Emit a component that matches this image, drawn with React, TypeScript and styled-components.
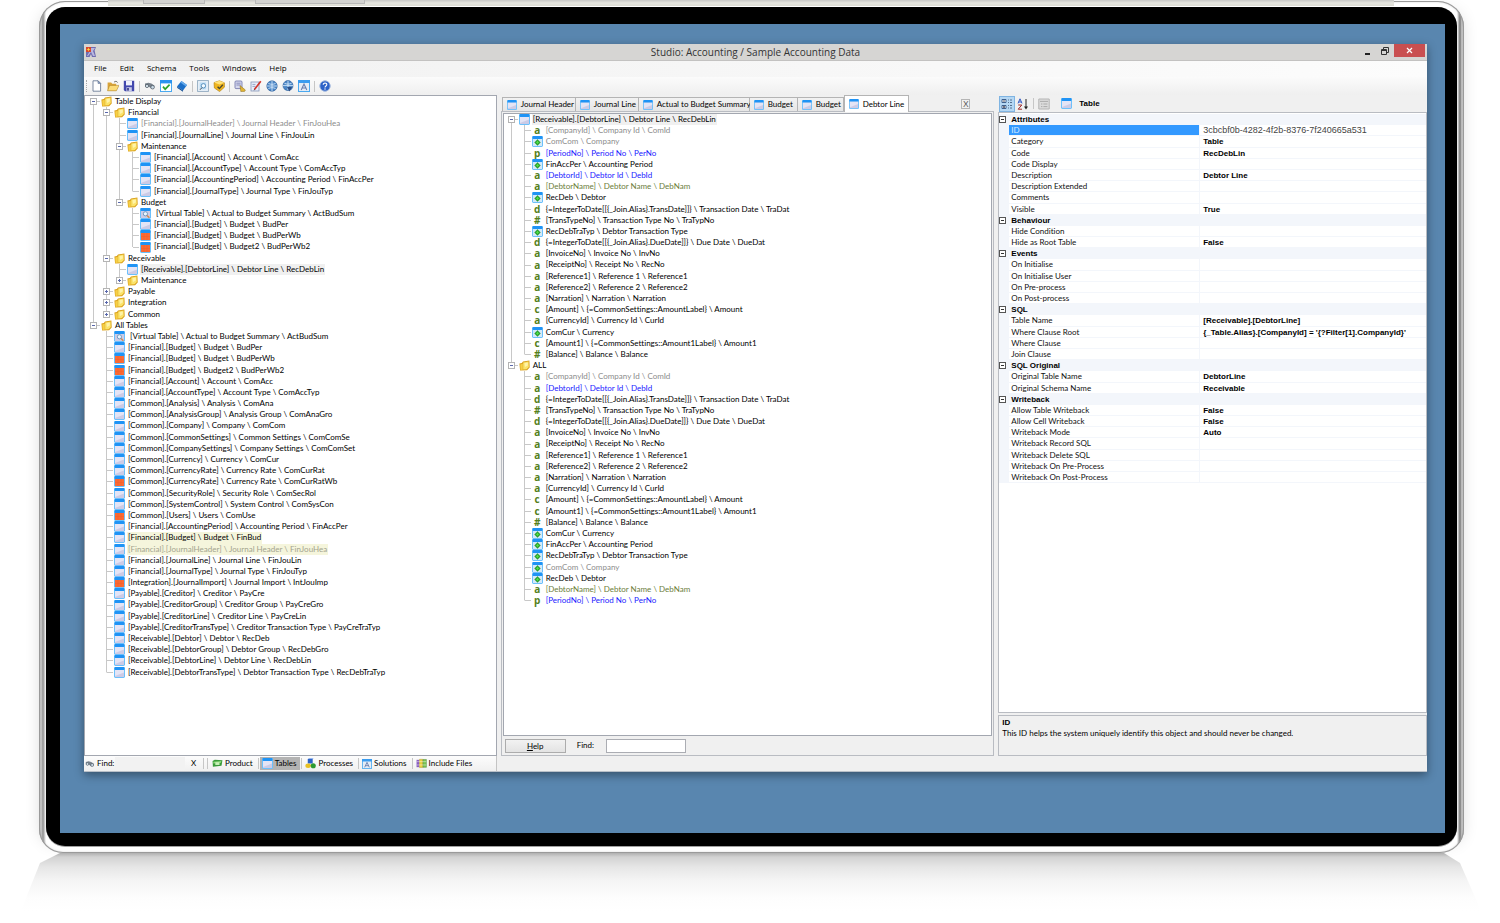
import React from "react";
import styled, { createGlobalStyle, css } from "styled-components";

const GlobalStyle = createGlobalStyle`
  * { box-sizing: border-box; }
  body { margin: 0; background: #fff; font: 8px/11px Lato, "Liberation Sans", sans-serif; font-variant-ligatures: none; color: #000; }
  button, input { font: inherit; color: inherit; margin: 0; padding: 0; border: 0; border-radius: 0; background: none; }
  svg { display: block; flex: none; }
`;

/* ---------- Monitor ---------- */
const Stage = styled.div`
  display: flex; flex-direction: column; min-height: 100vh; overflow: hidden;
`;
const TopEdge = styled.div`
  position: absolute; top: 0; left: 108px; right: 106px; height: 6px;
  background: linear-gradient(#c8c8c6, #e6e6e0 50%, #dcdcd4); z-index: 1;
  display: flex; padding-left: 35px; gap: 50px;
`;
const EdgeKey = styled.i<{ $w: number }>`
  width: ${(p) => p.$w}px; height: 4px; background: #d2d2d0; border: 1px solid #b8b8b8; border-top: 0;
`;
const Monitor = styled.div`
  flex: 1; display: flex; margin: 1px 36px 0 39px; padding: 6px 7px 7px; border-radius: 26px 26px 24px 24px;
  background: linear-gradient(90deg, #9a9a9a 0, #d0d0d0 2px, #8f8f8f 4px, #fff 7px, #fff calc(100% - 7px), #777 calc(100% - 4px), #d0d0d0 calc(100% - 2px), #9a9a9a 100%);
  box-shadow: inset 0 0 0 1px #9a9a9a, inset 0 0 3px #a8a8a8, -8px 0 18px -12px rgba(0, 0, 0, .2), 8px 0 18px -12px rgba(0, 0, 0, .2);
`;
const Bezel = styled.div`
  flex: 1; display: flex; min-width: 0; background: #000; border-radius: 19px; padding: 17px 12px 13px 14px;
  box-shadow: 0 1px #a0a0a0;
`;
const Desktop = styled.div`
  flex: 1; display: flex; min-width: 0; background: #5986af; padding: 20px 18px 61px 24px;
`;
const Reflection = styled.div`
  height: 70px; margin: 0 18px 0 20px; flex: none;
  background: linear-gradient(#b0b0b0 0, #d2d2d2 4px, #e6e6e6 14px, #f5f5f5 28px, #fdfdfd 44px, #fff 58px);
  clip-path: polygon(40px 0, calc(100% - 38px) 0, calc(100% - 22px) 10px, 100% 60px, 0 60px, 20px 10px);
`;

/* ---------- Window ---------- */
const Window = styled.div`
  flex: 1; min-width: 0; display: flex; flex-direction: column; background: #f0f0f0;
  box-shadow: 0 3px 9px rgba(0, 0, 0, .4); border-bottom: 1px solid #b9c0c8;
`;
const TitleBar = styled.header`
  display: grid; grid-template-columns: 72px 1fr 72px; height: 17px; background: #d6d5d3; border-bottom: 1px solid #c3c2c1; align-items: start;
`;
const AppIcon = styled.div`padding: 3px 2px;`;
const Title = styled.h1`
  margin: 0; font: 400 10px/16px "Open Sans", sans-serif; text-align: center; color: #333;
`;
const WinButtons = styled.div`display: flex; justify-content: flex-end; padding-right: 2px;`;
const WinButton = styled.button<{ $close?: boolean }>`
  width: ${(p) => (p.$close ? 31 : 18)}px; height: 13px; display: flex; align-items: center; justify-content: center;
  ${(p) => p.$close && css`background: #c94f50; color: #fff;`}
`;
const MenuBar = styled.nav`
  display: flex; align-items: flex-start; gap: 13px; padding-left: 10px; height: 16px; background: linear-gradient(90deg, #f1f1f1, #fcfcfc);
  font: 8px/14px "Open Sans", sans-serif;
`;
const MenuItem = styled.button``;
const ToolBar = styled.div`
  display: flex; align-items: center; height: 18px; padding-left: 2px; background: linear-gradient(#fbfbfb, #efefef);
`;
const Grip = styled.i`width: 1px; height: 12px; margin-right: 2px; border-left: 1px dotted #aaa;`;
const ToolButton = styled.button`width: 16px; height: 16px; display: flex; align-items: center; justify-content: center;`;
const Sep = styled.i<{ $m?: number }>`width: 1px; height: 11px; flex: none; background: #c6c6c6; margin: 0 ${(p) => p.$m ?? 2}px;`;

const Main = styled.main`
  flex: 1; display: grid; grid-template-columns: 413fr 494fr 429fr; column-gap: 4px; min-height: 0;
`;
const Column = styled.section`display: flex; flex-direction: column; min-width: 0;`;

/* ---------- Tree ---------- */
const TreeBox = styled.div<{ $pad?: string }>`
  flex: 1; background: #fff; border: 1px solid #a3a7b0; padding: ${(p) => p.$pad ?? "0 2px"};
`;
const List = styled.ul`list-style: none; margin: 0; padding: 0;`;
const Row = styled.li`display: flex; align-items: stretch; min-height: 1.4em; white-space: nowrap;`;
const Cell = styled.span<{ $line: "none" | "full" | "top" | "bottom" }>`
  width: 13px; flex: none; display: flex; align-items: center; padding-left: 3px;
  background-repeat: no-repeat;
  background-image: ${(p) => (p.$line === "none" ? "none" : "linear-gradient(#c8c8c8, #c8c8c8)")};
  background-size: 1px ${(p) => (p.$line === "full" ? "100%" : "50%")};
  background-position: 6px ${(p) => (p.$line === "bottom" ? "100%" : "0")};
`;
const Stub = styled.i<{ $box?: boolean }>`
  height: 1px; width: ${(p) => (p.$box ? 3 : 7)}px; margin-left: ${(p) => (p.$box ? 0 : 4)}px; background: #c8c8c8;
`;
const IconSlot = styled.span`width: 11px; margin: 0 2px 0 1px; flex: none; display: flex; align-items: center; justify-content: center;`;
const Label = styled.span<{ $color?: string; $bg?: string; $indent?: boolean }>`
  padding: 0 1px; padding-left: ${(p) => (p.$indent ? 3 : 1)}px; color: ${(p) => p.$color ?? "#000"}; background: ${(p) => p.$bg ?? "transparent"};
`;
const Glyph = styled.b`font: 700 10px/11px "Open Sans", sans-serif; color: #55801c;`;

/* ---------- Tabs ---------- */
const TabRow = styled.div`display: flex; align-items: flex-end; height: 16px; padding-left: 1px;`;
const Tab = styled.button<{ $w: number; $on?: boolean }>`
  display: flex; align-items: center; gap: 4px; width: ${(p) => p.$w}px; padding-left: 4px; white-space: nowrap;
  height: ${(p) => (p.$on ? 17 : 14)}px; margin-bottom: ${(p) => (p.$on ? -1 : 0)}px; position: relative;
  border: 1px solid #b4b4b4; border-left-width: ${(p) => (p.$on ? 1 : 0)}px; border-bottom: 0;
  background: ${(p) => (p.$on ? "#fff" : "linear-gradient(#f2f2f2, #e6e6e6)")};
  &:first-child { border-left-width: 1px; }
`;
const CloseTab = styled.button`
  margin: 0 24px 2px auto; width: 9px; height: 10px; border: 1px solid #b5b5b5; color: #555; line-height: 8px;
`;
const EditorBox = styled.div`
  flex: 1; display: flex; flex-direction: column; padding: 1px; border: 1px solid #b9bcc2;
`;
const FindRow = styled.div`display: flex; align-items: center; height: 18px; padding: 1px 2px 0;`;
const HelpButton = styled.button`
  width: 61px; height: 14px; border: 1px solid #acacac; background: linear-gradient(#f2f2f2, #e3e3e3); line-height: 12px;
`;
const FindLabel = styled.label`width: 40px; padding-left: 11px;`;
const FindInput = styled.input`width: 80px; height: 14px; border: 1px solid #abadb3; background: #fff;`;

/* ---------- Property grid ---------- */
const PropBar = styled.div`display: flex; align-items: center; height: 17px; padding-left: 1px;`;
const PropButton = styled.button<{ $on?: boolean }>`
  width: 16px; height: 16px; display: flex; align-items: center; justify-content: center;
  ${(p) => p.$on && css`background: #b5d7f3; border: 1px solid #7fb4e2;`}
`;
const PropTitle = styled.h2`
  display: flex; align-items: center; gap: 7px; margin: 0 0 0 9px; font: 700 8px/11px "Liberation Sans", Arial, sans-serif;
`;
const PropBox = styled.div`flex: 1; background: #fff; border: 1px solid #b9bcc2; padding-top: 1px;`;
const PropTable = styled.table`width: 100%; border-collapse: collapse; display: block; font-size: 8px;`;
const PropBody = styled.tbody`display: block;`;
const PropRow = styled.tr`display: grid; grid-template-columns: 10px 192fr 227fr; min-height: 1.4em; white-space: nowrap;`;
const Gutter = styled.td`padding: 0; background: #f3f6fb; display: flex; align-items: center;`;
const Category = styled.th`
  grid-column: 2 / 4; padding: 0 2px; text-align: left; font-weight: 700; background: #f3f6fb;
  font-family: "Liberation Sans", Arial, sans-serif;
`;
const Name = styled.th<{ $on?: boolean }>`
  padding: 0 2px; text-align: left; font-weight: 400; color: ${(p) => (p.$on ? "#d8ebff" : "#111")};
  background: ${(p) => (p.$on ? "#3399ff" : "#fff")}; box-shadow: inset -1px -1px #f3f6fb;
`;
const Value = styled.td<{ $plain?: boolean }>`
  padding: 0 3px; box-shadow: inset 0 -1px #f3f6fb; overflow: hidden; font-family: "Liberation Sans", Arial, sans-serif;
  ${(p) => (p.$plain ? css`color: #444; font-size: 9px;` : css`color: #000; font-weight: 700;`)}
`;
const Description = styled.div`
  height: 41px; margin-top: 2px; padding: 1px 3px; border: 1px solid #b9bcc2;
  h3 { margin: 0; font: 700 8px/11px "Liberation Sans", Arial, sans-serif; } p { margin: 0; }
`;

/* ---------- Status bar ---------- */
const StatusBar = styled.footer`display: grid; grid-template-columns: 413fr 931fr; height: 15px;`;
const StatusTools = styled.div`
  display: flex; align-items: center; background: linear-gradient(#fcfcfc, #f0f0f0); border-right: 1px solid #c4c4c4; white-space: nowrap;
`;
const StatusFind = styled.label`display: flex; align-items: center; gap: 2px; width: 31px; padding-left: 1px;`;
const StatusInput = styled.input`width: 70px; height: 13px; background: #f2f2f2;`;
const Clear = styled.button`width: 17px;`;
const ViewButton = styled.button<{ $on?: boolean }>`
  display: flex; align-items: center; gap: 2px; height: 13px; padding: 0 4px 0 2px; background: ${(p) => (p.$on ? "#b3b3b3" : "none")};
`;

/* ---------- Icons ---------- */
type Kind = "folder" | "table" | "orange" | "virtual" | "link" | "a" | "p" | "d" | "#" | "c";

const TableIcon = ({ kind = "table", size = 11 }: { kind?: string; size?: number }) => (
  <svg width={size} height={size} viewBox="0 0 11 11" aria-hidden="true">
    <rect x="0" y="0" width="11" height="11" rx="1.4" fill="#6cc0fb" />
    <rect x=".5" y="0" width="10" height="3" rx="1" fill="#1f93f5" />
    <rect x="1" y="3" width="9" height="7" fill={kind === "orange" ? "#fb6a35" : kind === "link" ? "#d3e9fa" : "#cccbe6"} />
    {kind === "table" && <path d="M1 3h9v2.4L1 9z" fill="#e4e4f5" />}
    {kind === "orange" && <path d="M4 3v7M7 3v7M1 6.5h9" stroke="#f05a26" strokeWidth=".4" />}
    {kind === "virtual" && (
      <>
        <circle cx="5.4" cy="5.8" r="2.1" fill="#eaf6ff" stroke="#5b8ab5" strokeWidth=".8" />
        <path d="M7 7.4l2.4 2.4" stroke="#d08a4c" strokeWidth="1.4" />
      </>
    )}
    {kind === "link" && (
      <>
        <path d="M5.5 3.4L8.4 6.4 5.5 9.4 2.6 6.4z" fill="#27a52c" stroke="#27852c" strokeWidth=".4" />
        <path d="M5.5 5v2.8M4.1 6.4h2.8" stroke="#55e04c" strokeWidth=".9" />
      </>
    )}
  </svg>
);

const FolderIcon = () => (
  <svg width="11" height="11" viewBox="0 0 11 11" aria-hidden="true">
    <path d="M.4 3.6l2.4-.6 1.2-1.6L10.4.6l.3 6.8-2.6 2.8-7 .4z" fill="#d9a01c" />
    <path d="M1.2 4.4l2.6-.6v6l-2.2.2z" fill="#f6cf46" />
    <path d="M4.2 2.6l5.4-1.2.2 5.6L7.6 9.2l-3.4.3z" fill="#fbe36a" />
    <path d="M5.4 3.2l3.4-.8v3.2L6 7z" fill="#fff3a8" />
  </svg>
);

const Expander = ({ open, dark }: { open?: boolean; dark?: boolean }) => (
  <svg width="7" height="7" viewBox="0 0 7 7" aria-hidden="true">
    <rect x=".5" y=".5" width="6" height="6" fill="#fff" stroke={dark ? "#555" : "#b4b4b4"} />
    <path d={open ? "M2 3.5h3" : "M2 3.5h3M3.5 2v3"} stroke={dark ? "#333" : "#5a68ac"} />
  </svg>
);

const AppGlyph = () => (
  <svg width="10" height="10" viewBox="0 0 10 10" aria-hidden="true">
    <path d="M0 0h10L8.6 3.4 10 10H6L5 7 3.6 10H0z" fill="#6f6cb0" />
    <path d="M5 1h4L7 4l2 5H7L5 5 2 9H1l3-5z" fill="#b9b8e0" />
    <path d="M0 0h5v5H0z" fill="#d8452c" />
    <path d="M2.5.4l.6 1.5 1.5.6-1.5.6-.6 1.5-.6-1.5L.4 2.5l1.5-.6z" fill="#ffd83c" />
  </svg>
);

const toolIcons: Record<string, React.ReactNode> = {
  New: <><path d="M2 .8h5L9.6 3.4v7.8H2z" fill="#fff" stroke="#5b6d8c" strokeWidth=".8" /><path d="M7 .8v2.6h2.6z" fill="#9fb2d4" stroke="#5b6d8c" strokeWidth=".6" /></>,
  Open: <><path d="M.6 2.6h3.6l1 1.2h4v7H.6z" fill="#d9a43a" /><path d="M2.6 5.4H12L9.4 10.8H.6z" fill="#fbdc7a" stroke="#a87a1c" strokeWidth=".5" /><path d="M7 2.2c1.4-1.4 3-1 3.6.4" fill="none" stroke="#555" strokeWidth=".8" /></>,
  Save: <><path d="M.8.8h10.4v10.4H2L.8 10z" fill="#4147ad" /><rect x="3" y=".8" width="6" height="4.6" fill="#eef0fb" /><rect x="3.4" y="7.2" width="5.4" height="4" fill="#c6c9e8" /><rect x="4.2" y="8" width="1.6" height="2.6" fill="#2b2f80" /></>,
  Find: <><path d="M1 3.6l3.4-.8 3 .8 3.2 2.2-1 2.4-2.6.4-2-1.8-1.8.6-2.2-1z" fill="#78828c" /><circle cx="3" cy="6" r="1.6" fill="#d8e6ee" stroke="#4a5560" strokeWidth=".7" /><circle cx="8.6" cy="7.2" r="1.8" fill="#c9dae6" stroke="#4a5560" strokeWidth=".7" /></>,
  Validate: <><rect x=".5" y=".5" width="11" height="11" fill="#fff" stroke="#4ba9f0" /><rect x="0" y="0" width="12" height="3.4" fill="#2a93ef" /><path d="M3 6.6l2.2 2.6L9.6 4.6" fill="none" stroke="#2ba32b" strokeWidth="1.7" /></>,
  Book: <><path d="M1 6.4L5.4 1 11 5 7 10.6z" fill="#1b6fc8" /><path d="M1 6.4l6 4.2v1.2L1.4 8z" fill="#0d4a92" /><path d="M5.4 1L11 5l-1 1.4L4.4 2.4z" fill="#64a9ea" /></>,
  Preview: <><rect x=".6" y=".6" width="10.8" height="10.8" fill="#e9f2fa" stroke="#8fa9bf" strokeWidth=".9" /><rect x="2.6" y="2.4" width="6.6" height="7" fill="#bcdcf4" /><circle cx="6.4" cy="5.8" r="2.2" fill="#f2faff" stroke="#4d88b8" strokeWidth=".9" /><path d="M3 9.8l2-2.2" stroke="#555" /></>,
  Security: <><path d="M1 2.6L6.4.8 11.4 2.8v4.4L6.6 11.6 1.4 8z" fill="#f0b51e" stroke="#a87508" strokeWidth=".6" /><path d="M1 2.6l5.4 1.8 5-1.6L6.4.8z" fill="#ffe27a" /><path d="M4.6 6.8l1.8 1.8 3.4-3.8" fill="none" stroke="#4a4a30" strokeWidth="1.4" /></>,
  Query: <><rect x="1" y="1" width="7" height="7.6" rx="1" fill="#d5d8ee" stroke="#6a6fa6" strokeWidth=".8" /><path d="M2.4 3.2h4.2M2.4 5h4.2" stroke="#6a6fa6" strokeWidth=".7" /><path d="M6 5.6l5.4 4.4-1 1.6H6.8z" fill="#e0b434" stroke="#8a6a1a" strokeWidth=".5" /></>,
  Edit: <><rect x="1" y="2" width="8" height="9" fill="#e8eefb" stroke="#8796b8" strokeWidth=".8" /><path d="M2.4 4.4h3M2.4 6.4h3" stroke="#7788b0" strokeWidth=".7" /><path d="M4.4 9.6L10.8 1.2" stroke="#d1352b" strokeWidth="1.7" /><path d="M3.6 10.6l.6-1.4 1 .6z" fill="#222" /></>,
  Publish: <><circle cx="6" cy="6" r="5.2" fill="#4b86c6" stroke="#2a5c98" strokeWidth=".6" /><path d="M1 6h10M6 1v10M2.4 3.4c2 1.2 5.2 1.2 7.2 0M2.4 8.6c2-1.2 5.2-1.2 7.2 0" fill="none" stroke="#dff0ff" strokeWidth=".8" /></>,
  Download: <><circle cx="6" cy="5.6" r="5" fill="#4b86c6" stroke="#2a5c98" strokeWidth=".6" /><path d="M1 5.6h10M6 1v9M2.4 3.2c2 1.2 5.2 1.2 7.2 0" fill="none" stroke="#dff0ff" strokeWidth=".8" /><path d="M5 7h5L7.5 11.4z" fill="#2a4d86" /></>,
  Solution: <><rect x=".5" y=".5" width="11" height="11" fill="#e4ecf6" stroke="#4ba9f0" /><rect x="0" y="0" width="12" height="3" fill="#3a9cf0" /><path d="M3.2 10L6 4l2.8 6M4.2 8h3.6" fill="none" stroke="#6a7fae" strokeWidth="1.1" /></>,
  Help: <><circle cx="6" cy="6" r="5.2" fill="#2c62c8" stroke="#9cb4dc" strokeWidth="1" /><path d="M4.2 4.8c0-2.4 3.8-2.2 3.6 0C7.7 6 6 6 6 7.4" fill="none" stroke="#fff" strokeWidth="1.1" /><circle cx="6" cy="9" r=".7" fill="#fff" /></>,
  Product: <><path d="M.6 3.4L3 2l8.4.4-1 6L1 9.6z" fill="#3a9a3a" /><path d="M1.4 4l8.8-.8-.4 2L1.4 6z" fill="#8ddc7a" /><rect x="3.6" y="4.6" width="4.6" height="3" fill="#c9f0b8" /></>,
  Processes: <><path d="M3 1h5.4v5H3z" fill="#2b62c8" /><path d="M3 1l1.6-.8h5L8.4 1z" fill="#7ca6ec" /><ellipse cx="3.4" cy="8.4" rx="3" ry="2.4" fill="#e8c022" /><circle cx="9" cy="8.4" r="2.8" fill="#2d9a32" /></>,
  Include: <><path d="M.6 2h3v8h-3z" fill="#8a5fc0" /><path d="M3.8 1.4h3.6v9H3.8z" fill="#e8ce3c" stroke="#9a8418" strokeWidth=".4" /><path d="M7.6 1.6h3.8v8.6H7.6z" fill="#7ac253" stroke="#3c7a22" strokeWidth=".4" /><path d="M.8 4h10.4M.8 7.6h10.4" stroke="#fff" strokeWidth=".5" /></>,
};
const ToolIcon = ({ name, size = 12 }: { name: string; size?: number }) => (
  <svg width={size} height={size} viewBox="0 0 12 12" aria-hidden="true">{toolIcons[name]}</svg>
);

/* ---------- Data ---------- */
type Node = { t: string; k: Kind; open?: boolean; color?: string; bg?: string; kids?: Node[]; closed?: boolean };
const GRAY = "#8c8c8c", BLUE = "#1a1aff", OLIVE = "#6b7d3a", BEIGE = "#f5f5dc", SEL = "#f0f0f0";
const n = (t: string, k: Kind = "table", extra: Partial<Node> = {}): Node => ({ t, k, ...extra });
const dir = (t: string, kids: Node[]): Node => ({ t, k: "folder", kids });
const shut = (t: string): Node => ({ t, k: "folder", closed: true });
const B = "\\";

const tables: Node[] = [
  dir("Table Display", [
    dir("Financial", [
      n(`[Financial].[JournalHeader] ${B} Journal Header ${B} FinJouHea`, "table", { color: GRAY }),
      n(`[Financial].[JournalLine] ${B} Journal Line ${B} FinJouLin`),
      dir("Maintenance", [
        n(`[Financial].[Account] ${B} Account ${B} ComAcc`),
        n(`[Financial].[AccountType] ${B} Account Type ${B} ComAccTyp`),
        n(`[Financial].[AccountingPeriod] ${B} Accounting Period ${B} FinAccPer`),
        n(`[Financial].[JournalType] ${B} Journal Type ${B} FinJouTyp`),
      ]),
      dir("Budget", [
        n(`[Virtual Table] ${B} Actual to Budget Summary ${B} ActBudSum`, "virtual"),
        n(`[Financial].[Budget] ${B} Budget ${B} BudPer`),
        n(`[Financial].[Budget] ${B} Budget ${B} BudPerWb`, "orange"),
        n(`[Financial].[Budget] ${B} Budget2 ${B} BudPerWb2`, "orange"),
      ]),
    ]),
    dir("Receivable", [
      n(`[Receivable].[DebtorLine] ${B} Debtor Line ${B} RecDebLin`, "table", { bg: SEL }),
      shut("Maintenance"),
    ]),
    shut("Payable"),
    shut("Integration"),
    shut("Common"),
  ]),
  dir("All Tables", [
    n(`[Virtual Table] ${B} Actual to Budget Summary ${B} ActBudSum`, "virtual"),
    n(`[Financial].[Budget] ${B} Budget ${B} BudPer`),
    n(`[Financial].[Budget] ${B} Budget ${B} BudPerWb`, "orange"),
    n(`[Financial].[Budget] ${B} Budget2 ${B} BudPerWb2`, "orange"),
    n(`[Financial].[Account] ${B} Account ${B} ComAcc`),
    n(`[Financial].[AccountType] ${B} Account Type ${B} ComAccTyp`),
    n(`[Common].[Analysis] ${B} Analysis ${B} ComAna`),
    n(`[Common].[AnalysisGroup] ${B} Analysis Group ${B} ComAnaGro`),
    n(`[Common].[Company] ${B} Company ${B} ComCom`),
    n(`[Common].[CommonSettings] ${B} Common Settings ${B} ComComSe`),
    n(`[Common].[CompanySettings] ${B} Company Settings ${B} ComComSet`),
    n(`[Common].[Currency] ${B} Currency ${B} ComCur`),
    n(`[Common].[CurrencyRate] ${B} Currency Rate ${B} ComCurRat`),
    n(`[Common].[CurrencyRate] ${B} Currency Rate ${B} ComCurRatWb`, "orange"),
    n(`[Common].[SecurityRole] ${B} Security Role ${B} ComSecRol`),
    n(`[Common].[SystemControl] ${B} System Control ${B} ComSysCon`),
    n(`[Common].[Users] ${B} Users ${B} ComUse`, "orange"),
    n(`[Financial].[AccountingPeriod] ${B} Accounting Period ${B} FinAccPer`),
    n(`[Financial].[Budget] ${B} Budget ${B} FinBud`, "table", { bg: BEIGE }),
    n(`[Financial].[JournalHeader] ${B} Journal Header ${B} FinJouHea`, "table", { bg: BEIGE, color: "#a3a38e" }),
    n(`[Financial].[JournalLine] ${B} Journal Line ${B} FinJouLin`),
    n(`[Financial].[JournalType] ${B} Journal Type ${B} FinJouTyp`),
    n(`[Integration].[JournalImport] ${B} Journal Import ${B} IntJouImp`, "orange"),
    n(`[Payable].[Creditor] ${B} Creditor ${B} PayCre`),
    n(`[Payable].[CreditorGroup] ${B} Creditor Group ${B} PayCreGro`),
    n(`[Payable].[CreditorLine] ${B} Creditor Line ${B} PayCreLin`),
    n(`[Payable].[CreditorTransType] ${B} Creditor Transaction Type ${B} PayCreTraTyp`),
    n(`[Receivable].[Debtor] ${B} Debtor ${B} RecDeb`),
    n(`[Receivable].[DebtorGroup] ${B} Debtor Group ${B} RecDebGro`),
    n(`[Receivable].[DebtorLine] ${B} Debtor Line ${B} RecDebLin`),
    n(`[Receivable].[DebtorTransType] ${B} Debtor Transaction Type ${B} RecDebTraTyp`),
  ]),
];

const f = {
  company: n(`[CompanyId] ${B} Company Id ${B} ComId`, "a", { color: GRAY }),
  comCom: n(`ComCom ${B} Company`, "link", { color: GRAY }),
  period: n(`[PeriodNo] ${B} Period No ${B} PerNo`, "p", { color: BLUE }),
  finAcc: n(`FinAccPer ${B} Accounting Period`, "link"),
  debtorId: n(`[DebtorId] ${B} Debtor Id ${B} DebId`, "a", { color: BLUE }),
  debtorName: n(`[DebtorName] ${B} Debtor Name ${B} DebNam`, "a", { color: OLIVE }),
  recDeb: n(`RecDeb ${B} Debtor`, "link"),
  traDat: n(`{=IntegerToDate[[{_Join.Alias}.TransDate]]} ${B} Transaction Date ${B} TraDat`, "d"),
  typNo: n(`[TransTypeNo] ${B} Transaction Type No ${B} TraTypNo`, "#"),
  traTyp: n(`RecDebTraTyp ${B} Debtor Transaction Type`, "link"),
  dueDat: n(`{=IntegerToDate[[{_Join.Alias}.DueDate]]} ${B} Due Date ${B} DueDat`, "d"),
  inv: n(`[InvoiceNo] ${B} Invoice No ${B} InvNo`, "a"),
  rec: n(`[ReceiptNo] ${B} Receipt No ${B} RecNo`, "a"),
  ref1: n(`[Reference1] ${B} Reference 1 ${B} Reference1`, "a"),
  ref2: n(`[Reference2] ${B} Reference 2 ${B} Reference2`, "a"),
  nar: n(`[Narration] ${B} Narration ${B} Narration`, "a"),
  amount: n(`[Amount] ${B} {=CommonSettings::AmountLabel} ${B} Amount`, "c"),
  cur: n(`[CurrencyId] ${B} Currency Id ${B} CurId`, "a"),
  comCur: n(`ComCur ${B} Currency`, "link"),
  amount1: n(`[Amount1] ${B} {=CommonSettings::Amount1Label} ${B} Amount1`, "c"),
  bal: n(`[Balance] ${B} Balance ${B} Balance`, "#"),
};
const fields: Node[] = [
  n(`[Receivable].[DebtorLine] ${B} Debtor Line ${B} RecDebLin`, "table", {
    bg: SEL,
    kids: [f.company, f.comCom, f.period, f.finAcc, f.debtorId, f.debtorName, f.recDeb, f.traDat, f.typNo, f.traTyp, f.dueDat,
      f.inv, f.rec, f.ref1, f.ref2, f.nar, f.amount, f.cur, f.comCur, f.amount1, f.bal],
  }),
  dir("ALL", [f.company, f.debtorId, f.traDat, f.typNo, f.dueDat, f.inv, f.rec, f.ref1, f.ref2, f.nar, f.cur, f.amount, f.amount1,
    f.bal, f.comCur, f.finAcc, f.traTyp, f.comCom, f.recDeb, f.debtorName, f.period]),
];

const properties: [string, [string, string?][]][] = [
  ["Attributes", [["ID", "3cbcbf0b-4282-4f2b-8376-7f240665a531"], ["Category", "Table"], ["Code", "RecDebLin"], ["Code Display"],
    ["Description", "Debtor Line"], ["Description Extended"], ["Comments"], ["Visible", "True"]]],
  ["Behaviour", [["Hide Condition"], ["Hide as Root Table", "False"]]],
  ["Events", [["On Initialise"], ["On Initialise User"], ["On Pre-process"], ["On Post-process"]]],
  ["SQL", [["Table Name", "[Receivable].[DebtorLine]"], ["Where Clause Root", "{_Table.Alias}.[CompanyId] = '{?Filter[1].CompanyId}'"],
    ["Where Clause"], ["Join Clause"]]],
  ["SQL Original", [["Original Table Name", "DebtorLine"], ["Original Schema Name", "Receivable"]]],
  ["Writeback", [["Allow Table Writeback", "False"], ["Allow Cell Writeback", "False"], ["Writeback Mode", "Auto"],
    ["Writeback Record SQL"], ["Writeback Delete SQL"], ["Writeback On Pre-Process"], ["Writeback On Post-Process"]]],
];

/* ---------- Components ---------- */
const NodeIcon = ({ kind }: { kind: Kind }) => {
  if (kind === "folder") return <FolderIcon />;
  if (kind.length === 1) return <Glyph>{kind}</Glyph>;
  return <TableIcon kind={kind} />;
};

const TreeRows = ({ nodes, guides = [] }: { nodes: Node[]; guides?: boolean[] }) => (
  <>
    {nodes.map((node, i) => {
      const last = i === nodes.length - 1;
      const first = i === 0 && guides.length === 0;
      const box = Boolean(node.kids || node.closed);
      return (
        <React.Fragment key={i}>
          <Row>
            {guides.map((g, j) => <Cell key={j} $line={g ? "full" : "none"} />)}
            <Cell $line={first ? "bottom" : last ? "top" : "full"}>
              {box && <Expander open={!node.closed} />}
              <Stub $box={box} />
            </Cell>
            <IconSlot><NodeIcon kind={node.k} /></IconSlot>
            <Label $color={node.color} $bg={node.bg} $indent={node.k === "virtual"}>{node.t}</Label>
          </Row>
          {node.kids && <TreeRows nodes={node.kids} guides={[...guides, !last]} />}
        </React.Fragment>
      );
    })}
  </>
);

const tabs: [string, number, boolean?][] = [
  ["Journal Header", 74], ["Journal Line", 63], ["Actual to Budget Summary", 111], ["Budget", 48], ["Budget", 46], ["Debtor Line", 65, true],
];
const toolGroups = [["New", "Open", "Save"], ["Find", "Validate", "Book"], ["Preview", "Security"], ["Query", "Edit", "Publish", "Download", "Solution"], ["Help"]];

export default function App() {
  return (
    <Stage>
      <GlobalStyle />
      <TopEdge><EdgeKey $w={62} /><EdgeKey $w={110} /></TopEdge>
      <Monitor><Bezel><Desktop>
        <Window>
          <TitleBar>
            <AppIcon><AppGlyph /></AppIcon>
            <Title>Studio: Accounting / Sample Accounting Data</Title>
            <WinButtons>
              <WinButton aria-label="Minimize"><svg width="7" height="9"><path d="M1 8h5" stroke="#222" strokeWidth="2" /></svg></WinButton>
              <WinButton aria-label="Restore"><svg width="8" height="8"><path d="M.5 2.5h5v5h-5zM2.5 2V.5h5v5H6M.5 3.5h5" fill="none" stroke="#333" /></svg></WinButton>
              <WinButton $close aria-label="Close"><svg width="7" height="7"><path d="M1 1l5 5M6 1L1 6" stroke="#fff" strokeWidth="1.2" /></svg></WinButton>
            </WinButtons>
          </TitleBar>
          <MenuBar>{["File", "Edit", "Schema", "Tools", "Windows", "Help"].map((m) => <MenuItem key={m}>{m}</MenuItem>)}</MenuBar>
          <ToolBar>
            <Grip />
            {toolGroups.map((g, i) => (
              <React.Fragment key={i}>
                {i > 0 && <Sep />}
                {g.map((t) => <ToolButton key={t} aria-label={t}><ToolIcon name={t} /></ToolButton>)}
              </React.Fragment>
            ))}
          </ToolBar>
          <Main>
            <Column><TreeBox><List><TreeRows nodes={tables} /></List></TreeBox></Column>
            <Column>
              <TabRow>
                {tabs.map(([t, w, on], i) => <Tab key={i} $w={w} $on={on}><TableIcon size={10} />{t}</Tab>)}
                <CloseTab aria-label="Close tab">X</CloseTab>
              </TabRow>
              <EditorBox>
                <TreeBox $pad="0 1px"><List><TreeRows nodes={fields} /></List></TreeBox>
                <FindRow>
                  <HelpButton><u>H</u>elp</HelpButton>
                  <FindLabel htmlFor="find-field">Find:</FindLabel>
                  <FindInput id="find-field" />
                </FindRow>
              </EditorBox>
            </Column>
            <Column>
              <PropBar>
                <PropButton $on aria-label="Categorized">
                  <svg width="12" height="12" viewBox="0 0 12 12"><path d="M1 1.5h4v3H1zM1 7.5h4v3H1z" fill="#fff" stroke="#3f5f8c" /><path d="M2 3h2M2 9h2M3 8v2" stroke="#223" strokeWidth=".8" /><path d="M7 2h1M9 2h2M7 4.5h1M9 4.5h2M7 7.5h1M9 7.5h2M7 10h1M9 10h2" stroke="#56708f" /></svg>
                </PropButton>
                <PropButton aria-label="Alphabetical">
                  <svg width="12" height="12" viewBox="0 0 12 12"><path d="M1 5.4L3 .8l2 4.6M1.8 4h2.4" fill="none" stroke="#2d56c4" /><path d="M1.2 7h3.6L1.2 11.2h3.8" fill="none" stroke="#a02c2c" /><path d="M9 1v9" stroke="#222" /><path d="M7 8.4h4L9 11.6z" fill="#222" /></svg>
                </PropButton>
                <Sep />
                <PropButton aria-label="Property pages">
                  <svg width="12" height="12" viewBox="0 0 12 12"><path d="M.8 1h10.4v10H.8z" fill="#dcdcdc" stroke="#b4b4b4" /><path d="M2 3.4h8M3 6h1.4M5.4 6h4M3 8.6h1.4M5.4 8.6h4" stroke="#aaa" /></svg>
                </PropButton>
                <PropTitle><TableIcon />Table</PropTitle>
              </PropBar>
              <PropBox>
                <PropTable><PropBody>
                  {properties.map(([cat, rows]) => (
                    <React.Fragment key={cat}>
                      <PropRow><Gutter><Expander open dark /></Gutter><Category>{cat}</Category></PropRow>
                      {rows.map(([k, v]) => (
                        <PropRow key={k}><Gutter /><Name scope="row" $on={k === "ID"}>{k}</Name><Value $plain={k === "ID"}>{v}</Value></PropRow>
                      ))}
                    </React.Fragment>
                  ))}
                </PropBody></PropTable>
              </PropBox>
              <Description><h3>ID</h3><p>This ID helps the system uniquely identify this object and should never be changed.</p></Description>
            </Column>
          </Main>
          <StatusBar>
            <StatusTools>
              <StatusFind htmlFor="find-table"><ToolIcon name="Find" size={10} />Find:</StatusFind>
              <StatusInput id="find-table" />
              <Clear aria-label="Clear find">X</Clear>
              <Sep $m={1} /><Sep $m={2} />
              <ViewButton><ToolIcon name="Product" size={11} />Product</ViewButton><Sep $m={1} />
              <ViewButton $on><TableIcon />Tables</ViewButton><Sep $m={1} />
              <ViewButton><ToolIcon name="Processes" size={11} />Processes</ViewButton><Sep $m={1} />
              <ViewButton><ToolIcon name="Solution" size={10} />Solutions</ViewButton><Sep $m={1} />
              <ViewButton><ToolIcon name="Include" size={11} />Include Files</ViewButton>
            </StatusTools>
          </StatusBar>
        </Window>
      </Desktop></Bezel></Monitor>
      <Reflection />
    </Stage>
  );
}
